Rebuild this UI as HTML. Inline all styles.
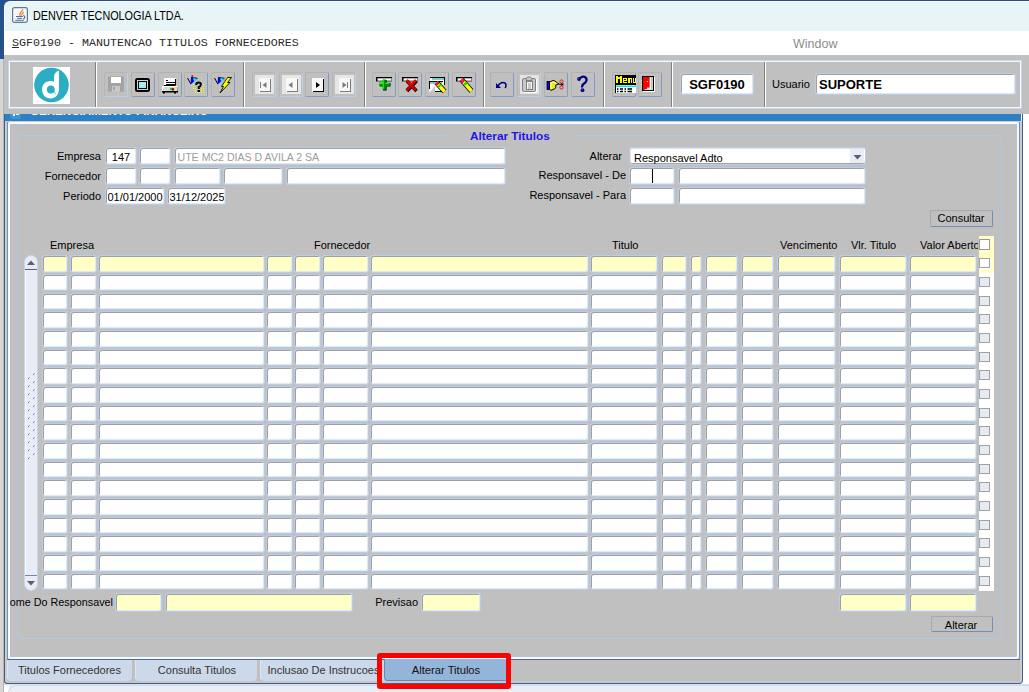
<!DOCTYPE html>
<html><head><meta charset="utf-8">
<style>
html,body{margin:0;padding:0;}
body{width:1029px;height:692px;overflow:hidden;position:relative;background:#fff;font-family:"Liberation Sans",sans-serif;}
.r,.t,.f,.b,.sv{position:absolute;}
.t{white-space:nowrap;line-height:1;}
.f{box-sizing:border-box;border:1px solid #b9cde8;border-radius:3px;box-shadow:inset 1px 1px 0 #a0a0a0, inset -1px -1px 0 #dfe8f5;}
.b{box-sizing:border-box;width:24px;height:25px;top:72px;border:1px solid;border-color:#b2b2b2 #7e9cc4 #7e9cc4 #b2b2b2;border-radius:2px;}
.b.dis{border-color:#b6b6b6 #b8cfee #b8cfee #b6b6b6;}

.sep{position:absolute;top:62px;height:45px;width:1px;background:#808080;border-right:1px solid #fff;}
</style></head><body>

<div class="r" style="left:0px;top:0px;width:1029px;height:692px;background:#fff;"></div>
<div class="r" style="left:0px;top:0px;width:3px;height:692px;background:#d6d6d6;"></div>
<div class="r" style="left:3px;top:0px;width:1px;height:692px;background:#b4b4b4;"></div>
<div class="r" style="left:0px;top:0px;width:1029px;height:1px;background:#2f4c7c;"></div>
<div class="r" style="left:0px;top:0px;width:4px;height:59px;background:#26508e;"></div>
<div class="r" style="left:0px;top:0px;width:14px;height:12px;background:#26508e;"></div>
<div class="r" style="left:4px;top:1px;width:1025px;height:30px;box-sizing:border-box;background:#e8f5f6;border-top-left-radius:6px;border-top:1px solid #f4fdfd;border-left:1px solid #f4fdfd;"></div>
<svg class="sv" style="left:12px;top:7px" width="16" height="16" viewBox="0 0 16 16">
<rect x="0.6" y="0.6" width="14.8" height="14.8" rx="1.8" fill="#f6f6f6" stroke="#5a7898" stroke-width="1.2"/>
<path d="M8.3 9 C7.2 7.5 8 6 9.5 4.5 C10.2 3.8 10.6 3.2 10.8 2.3 M9.3 8.6 C9.3 7.2 10.5 6.5 11.8 5.2" stroke="#ea7a1c" stroke-width="1.1" fill="none"/>
<path d="M4 9.5 H10.8 M5.2 11.4 H9.9 M3.3 13.3 H11.8" stroke="#4a7092" stroke-width="1" fill="none"/>
<path d="M11.3 8.3 Q14.2 10.3 11.3 12.2" stroke="#4a7092" stroke-width="1.1" fill="none"/>
</svg>
<div class="t" style="left:33px;top:10px;font-size:12px;color:#000;font-weight:normal;transform:scaleX(0.9);transform-origin:0 0;">DENVER TECNOLOGIA LTDA.</div>
<div class="r" style="left:4px;top:31px;width:1025px;height:24px;background:#fff;"></div>
<div class="t" style="left:12px;top:38px;font-size:11.67px;color:#2a2a2a;font-weight:normal;font-family:'Liberation Mono',monospace;"><u>S</u>GF0190 - MANUTENCAO TITULOS FORNECEDORES</div>
<div class="t" style="left:793px;top:38px;font-size:12.5px;color:#8c8c8c;font-weight:normal;">Window</div>
<div class="r" style="left:4px;top:55px;width:1025px;height:59px;background:#c0c0c0;"></div>
<div class="r" style="left:3px;top:55px;width:1px;height:4px;background:#284b8a;"></div>
<div class="r" style="left:8px;top:60px;width:1014px;height:49px;box-sizing:border-box;border:1px solid #c4d8f0;"></div>
<div class="r" style="left:9px;top:61px;width:1012px;height:47px;box-sizing:border-box;border:1px solid #f4f8fc;"></div>
<div class="sep" style="left:95px"></div>
<div class="sep" style="left:243px"></div>
<div class="sep" style="left:364px"></div>
<div class="sep" style="left:483px"></div>
<div class="sep" style="left:603px"></div>
<div class="sep" style="left:671px"></div>
<div class="sep" style="left:764px"></div>
<svg class="sv" style="left:33px;top:67px" width="37" height="37" viewBox="0 0 37 37">
<rect width="37" height="37" fill="#fff"/>
<circle cx="18.5" cy="18" r="17.3" fill="#2badc3"/>
<path d="M21 11 C21 6.5 23 4.5 26 3.5 L26 22 C26 27.5 22.5 31.5 17.5 31.5 C12.5 31.5 9 27.5 9 22.5 C9 17.5 12.5 14 17.5 14 C19 14 20.3 14.4 21 15 Z" fill="#fff"/>
<circle cx="17.8" cy="22.5" r="3.9" fill="#2badc3"/>
<path d="M21.2 22.5 C21.2 25 22 26.3 23.5 27.5 C22 27.3 21 26 20.8 24Z" fill="#2badc3"/>
</svg>
<div class="b dis" style="left:104px"><svg style="position:absolute;left:-1px;top:-1px" width="24" height="25" viewBox="0 0 24 25"><rect x="4" y="4" width="16" height="16" rx="1.5" fill="#a4a4a4"/>
<rect x="7" y="5" width="10" height="6" fill="#fff"/>
<rect x="8" y="14" width="8" height="6" fill="#c8c8c8"/>
<rect x="9" y="15" width="2" height="3" fill="#a4a4a4"/>
<path d="M5 4.5 H19 M5 19.5 H19" stroke="#b8b8b8" stroke-width="1" stroke-dasharray="1 1"/></svg></div>
<div class="b" style="left:131px"><svg style="position:absolute;left:-1px;top:-1px" width="24" height="25" viewBox="0 0 24 25"><rect x="5" y="7" width="13" height="12" rx="1.5" fill="#d4d4d4" stroke="#000" stroke-width="2"/>
<rect x="7.5" y="9.5" width="8" height="7" fill="#8af4f4" stroke="#000" stroke-width="1"/>
<path d="M8 11.5 H15 M8 13.5 H15" stroke="#c0e8e8" stroke-width="1"/></svg></div>
<div class="b" style="left:158px"><svg style="position:absolute;left:-1px;top:-1px" width="24" height="25" viewBox="0 0 24 25"><rect x="6" y="6" width="12" height="8" fill="#fff"/>
<path d="M17.5 7 V13.5 H6" stroke="#000" stroke-width="1" fill="none"/>
<path d="M8 8.5 H10 M8 10.5 H17 M8 12.5 H17" stroke="#000" stroke-width="1"/>
<rect x="4" y="14" width="16" height="5" fill="#d8d8d8"/>
<path d="M4 14.5 H19.5 M4.5 14 V19" stroke="#fff" stroke-width="1"/>
<path d="M19.5 15 V19" stroke="#a0a0a0" stroke-width="1"/>
<rect x="12" y="16" width="2" height="2" fill="#0c0"/><rect x="14" y="16" width="2" height="2" fill="#e00"/><rect x="16" y="16" width="2" height="1.5" fill="#ee0"/><rect x="14" y="17.5" width="2" height="1" fill="#00e"/>
<rect x="4" y="19" width="16" height="1.5" fill="#000"/><rect x="5" y="20" width="2" height="1.5" fill="#000"/><rect x="16" y="20" width="2" height="1.5" fill="#000"/></svg></div>
<div class="b" style="left:184px"><svg style="position:absolute;left:-1px;top:-1px" width="24" height="25" viewBox="0 0 24 25"><path d="M3.5 6 L6.8 12" stroke="#000" stroke-width="1"/>
<path d="M7 5.5 L13.5 6.5 L6.5 12.5 Z" fill="#0000f0"/><path d="M9 5.8 L13.5 6.5 L10 9.5 Z" fill="#00ffff"/>
<path d="M7 5.3 L13.5 6.3" stroke="#000" stroke-width="0.8"/><circle cx="8.3" cy="4" r="0.9" fill="#f00"/>
<g fill="#ffff00"><rect x="9" y="12" width="1" height="1"/><rect x="9" y="14" width="1" height="1"/><rect x="9" y="16" width="1" height="1"/><rect x="11" y="12" width="1" height="1"/><rect x="11" y="16" width="1" height="1"/><rect x="11" y="18" width="1" height="1"/><rect x="11" y="20" width="1" height="1"/><rect x="13" y="20" width="1" height="1"/><rect x="15" y="20" width="1" height="1"/><rect x="17" y="14" width="1" height="1"/><rect x="17" y="16" width="1" height="1"/><rect x="17" y="18" width="1" height="1"/><rect x="17" y="20" width="1" height="1"/><rect x="19" y="12" width="1" height="1"/><rect x="19" y="14" width="1" height="1"/><rect x="19" y="16" width="1" height="1"/><rect x="19" y="18" width="1" height="1"/><rect x="19" y="20" width="1" height="1"/></g>
<path d="M12 13 Q12.5 10.5 14.5 10.5 Q17 10.5 16.8 12.8 Q16.5 14.5 14.8 15 L14.8 17" stroke="#000" stroke-width="2" fill="none"/><rect x="13.5" y="18" width="2.5" height="2" fill="#000"/></svg></div>
<div class="b" style="left:211px"><svg style="position:absolute;left:-1px;top:-1px" width="24" height="25" viewBox="0 0 24 25"><path d="M3.5 6 L6.8 12" stroke="#000" stroke-width="1"/>
<path d="M7 5.5 L13.5 6.5 L6.5 12.5 Z" fill="#0000f0"/><path d="M9 5.8 L13.5 6.5 L10 9.5 Z" fill="#00ffff"/>
<path d="M7 5.3 L13.5 6.3" stroke="#000" stroke-width="0.8"/><path d="M16.5 5.5 L20.5 5.5 L16.5 10.5 L19 10.5 L9 21 L12.5 14.5 L10.5 14.5 Z" fill="#ffff00" stroke="#000" stroke-width="0.9" stroke-linejoin="bevel"/>
<path d="M15.5 6 L9.8 14.2" stroke="#909090" stroke-width="0.8"/></svg></div>
<div class="b dis" style="left:252px"><svg style="position:absolute;left:-1px;top:-1px" width="24" height="25" viewBox="0 0 24 25"><rect x="3" y="3" width="19" height="19" fill="#e6e6e6"/><rect x="7" y="6" width="12" height="14" fill="#f8f8f8"/><path d="M8 19.5 H19 M18.5 7 V19.5" stroke="#7c7c7c" stroke-width="1" fill="none"/><rect x="8" y="10" width="1" height="6" fill="#7c7c7c"/><path d="M14.5 10 L10.5 13 L14.5 16Z" fill="#7c7c7c"/></svg></div>
<div class="b dis" style="left:279px"><svg style="position:absolute;left:-1px;top:-1px" width="24" height="25" viewBox="0 0 24 25"><rect x="3" y="3" width="19" height="19" fill="#e6e6e6"/><rect x="7" y="6" width="12" height="14" fill="#f8f8f8"/><path d="M8 19.5 H19 M18.5 7 V19.5" stroke="#7c7c7c" stroke-width="1" fill="none"/><path d="M13.5 10 L9.5 13 L13.5 16Z" fill="#7c7c7c"/></svg></div>
<div class="b" style="left:305px"><svg style="position:absolute;left:-1px;top:-1px" width="24" height="25" viewBox="0 0 24 25"><rect x="7" y="6" width="12" height="14" fill="#f8f8f8"/><path d="M8 19.5 H19 M18.5 7 V19.5" stroke="#000" stroke-width="1" fill="none"/><path d="M11 10 L15 13 L11 16Z" fill="#000"/></svg></div>
<div class="b dis" style="left:332px"><svg style="position:absolute;left:-1px;top:-1px" width="24" height="25" viewBox="0 0 24 25"><rect x="3" y="3" width="19" height="19" fill="#e6e6e6"/><rect x="7" y="6" width="12" height="14" fill="#f8f8f8"/><path d="M8 19.5 H19 M18.5 7 V19.5" stroke="#7c7c7c" stroke-width="1" fill="none"/><path d="M10.5 10 L14.5 13 L10.5 16Z" fill="#7c7c7c"/><rect x="15" y="10" width="1" height="6" fill="#7c7c7c"/></svg></div>
<div class="b" style="left:372px"><svg style="position:absolute;left:-1px;top:-1px" width="24" height="25" viewBox="0 0 24 25"><rect x="4" y="5" width="16" height="4.5" fill="#000"/><rect x="5.5" y="6.3" width="13.8" height="2.4" fill="#fff"/><path d="M19.5 6 V9.5 H5" stroke="#808080" stroke-width="1" fill="none"/><path d="M12.8 8 V18.5 M8 12.8 H18.5" stroke="#000" stroke-width="3.6"/>
<path d="M12.3 7.5 V17.8 M7.2 12.3 H17.8" stroke="#009000" stroke-width="3.2"/>
<path d="M11.3 7.5 V17 M7 11.3 H11.3 M13.3 11.3 H17" stroke="#00ff00" stroke-width="1.2"/></svg></div>
<div class="b" style="left:398px"><svg style="position:absolute;left:-1px;top:-1px" width="24" height="25" viewBox="0 0 24 25"><rect x="4" y="5" width="16" height="4.5" fill="#000"/><rect x="5.5" y="6.3" width="13.8" height="2.4" fill="#fff"/><path d="M19.5 6 V9.5 H5" stroke="#808080" stroke-width="1" fill="none"/><path d="M9 9 L18.5 19 M18.5 9 L9 19" stroke="#000" stroke-width="3.4"/>
<path d="M8.5 8.3 L18 18.3 M18 8.3 L8.5 18.3" stroke="#c00000" stroke-width="3"/>
<path d="M8.5 8 L13 12.5 M17.5 8 L13 12.5" stroke="#ff0000" stroke-width="1.2"/></svg></div>
<div class="b" style="left:425px"><svg style="position:absolute;left:-1px;top:-1px" width="24" height="25" viewBox="0 0 24 25"><rect x="5" y="5" width="15" height="8" fill="#fff"/><path d="M5 5.5 H20 M19.5 5 V13" stroke="#000" stroke-width="1"/><rect x="7" y="6.5" width="12" height="1" fill="#00a0a0"/>
<rect x="4" y="9" width="14" height="11" fill="#fff"/><path d="M4 9.5 H18 M4.5 9 V17 M10 19.5 H18" stroke="#000" stroke-width="1"/><rect x="5" y="10.5" width="12" height="1" fill="#00a0a0"/>
<path d="M5 20 L10 14 L10 20Z" fill="#c8c8c8"/><path d="M11.5 10.5 L19.5 19.5" stroke="#000" stroke-width="5.2"/>
<path d="M11.5 10.5 L19.5 19.5" stroke="#ffff00" stroke-width="3.6"/>
<path d="M11.5 10.5 L13.26 12.48" stroke="#ff0000" stroke-width="3.6"/>
<path d="M11.9 10.95 L12.7 11.85" stroke="#ff00ff" stroke-width="2.4"/>
<path d="M13.9 13.2 L15.1 14.55" stroke="#00e000" stroke-width="3.6"/></svg></div>
<div class="b" style="left:452px"><svg style="position:absolute;left:-1px;top:-1px" width="24" height="25" viewBox="0 0 24 25"><rect x="4" y="5" width="16" height="4.5" fill="#000"/><rect x="5.5" y="6.3" width="13.8" height="2.4" fill="#fff"/><path d="M19.5 6 V9.5 H5" stroke="#808080" stroke-width="1" fill="none"/><path d="M9.5 7.5 L19.5 19" stroke="#000" stroke-width="5.2"/>
<path d="M9.5 7.5 L19.5 19" stroke="#ffff00" stroke-width="3.6"/>
<path d="M9.5 7.5 L11.7 10.03" stroke="#ff0000" stroke-width="3.6"/>
<path d="M10.0 8.075 L11.0 9.225" stroke="#ff00ff" stroke-width="2.4"/>
<path d="M12.5 10.95 L14.0 12.675" stroke="#00e000" stroke-width="3.6"/></svg></div>
<div class="b" style="left:490px"><svg style="position:absolute;left:-1px;top:-1px" width="24" height="25" viewBox="0 0 24 25"><path d="M8 14 Q10 10.5 13 10.5 Q16 10.5 16 13.5 Q16 15 15 16" stroke="#000080" stroke-width="1.5" fill="none"/>
<path d="M6 11 L6 16 L11 16 Z" fill="#000080"/></svg></div>
<div class="b dis" style="left:517px"><svg style="position:absolute;left:-1px;top:-1px" width="24" height="25" viewBox="0 0 24 25"><rect x="3" y="3" width="19" height="19" fill="#e4e4e4"/>
<rect x="5.5" y="6.5" width="13" height="13" rx="1.5" fill="#c8c8c8" stroke="#808080" stroke-width="1"/>
<path d="M6 20.5 H19 M19.5 7 V20" stroke="#fff" stroke-width="1"/>
<rect x="9.5" y="9.5" width="6" height="8" fill="#fafafa" stroke="#808080" stroke-width="1"/>
<path d="M9.5 6.5 L10.5 5 H13.5 L14.5 6.5 L15 8.5 H9 Z" fill="#c8c8c8" stroke="#808080" stroke-width="1"/>
<path d="M11 12 H14 M11 14 H14 M11 16 H14" stroke="#909090" stroke-width="0.9"/></svg></div>
<div class="b" style="left:544px"><svg style="position:absolute;left:-1px;top:-1px" width="24" height="25" viewBox="0 0 24 25"><rect x="3" y="9.5" width="2.5" height="8" fill="#0000ff" stroke="#000" stroke-width="0.8"/>
<path d="M5.5 10 L9 8.5 L11 9 L13.5 11 L15 11.8 L11.5 13 L12 15 L10.5 17 L7 18.3 L5.5 17.5 Z" fill="#ffff40" stroke="#000" stroke-width="1"/>
<path d="M8 12 H11 M8 14 H11 M8 16 H10" stroke="#b0a000" stroke-width="0.6"/>
<path d="M15 12.3 L19.5 12.3" stroke="#000" stroke-width="1"/>
<circle cx="17.5" cy="9.5" r="1.6" fill="none" stroke="#ff0000" stroke-width="0.9"/><circle cx="17.5" cy="15.5" r="1.6" fill="none" stroke="#ff0000" stroke-width="0.9"/>
<path d="M17.5 11 L19 13.5 M17.5 14 L19 11.5" stroke="#000" stroke-width="0.8"/></svg></div>
<div class="b" style="left:571px"><svg style="position:absolute;left:-1px;top:-1px" width="24" height="25" viewBox="0 0 24 25"><path d="M9 6.3 Q11 4.2 13.5 4.8 Q15.8 5.5 15.5 8.3 Q15.2 10.3 12.5 12 Q11 13 11 15.5" stroke="#000080" stroke-width="2.3" fill="none"/>
<circle cx="8" cy="7" r="1.9" fill="#000080"/><circle cx="11.5" cy="18.2" r="1.9" fill="#000080"/>
<circle cx="7.6" cy="6.5" r="0.5" fill="#8080ff"/><circle cx="11.1" cy="17.7" r="0.5" fill="#8080ff"/></svg></div>
<div class="b" style="left:612px"><svg style="position:absolute;left:-1px;top:-1px" width="24" height="25" viewBox="0 0 24 25"><rect x="3" y="3" width="21" height="9" fill="#000"/>
<g fill="#ffff00" shape-rendering="crispEdges"><rect x="4" y="4" width="2" height="7"/><rect x="8" y="4" width="2" height="7"/><rect x="6" y="5" width="1" height="2"/><rect x="7" y="5" width="1" height="2"/><rect x="6" y="6" width="2" height="1"/><rect x="11" y="6" width="4" height="1"/><rect x="11" y="6" width="1" height="5"/><rect x="14" y="6" width="1" height="3"/><rect x="11" y="8" width="4" height="1"/><rect x="11" y="10" width="4" height="1"/><rect x="16" y="6" width="2" height="5"/><rect x="16" y="6" width="4" height="1"/><rect x="19" y="6" width="1" height="5"/><rect x="21" y="6" width="1" height="5"/><rect x="21" y="10" width="3" height="1"/><rect x="23" y="6" width="1" height="5"/></g>
<rect x="3" y="12" width="21" height="9" fill="#fff"/>
<path d="M3 12.5 H24 M3.5 12 V21" stroke="#000" stroke-width="1"/><rect x="4" y="13.5" width="20" height="1.5" fill="#00e8e8"/>
<path d="M5 17 H6.5 M8 17 H11 M12.5 17 H14 M15.5 17 H20 M5 19.5 H6.5 M8 19.5 H11 M12.5 19.5 H14 M15.5 19.5 H20" stroke="#000" stroke-width="1.5"/></svg></div>
<div class="b" style="left:638px"><svg style="position:absolute;left:-1px;top:-1px" width="24" height="25" viewBox="0 0 24 25"><rect x="5" y="5" width="12" height="15" fill="#fff"/>
<rect x="4.5" y="4.5" width="11" height="14" fill="#c8c8c8" stroke="#000" stroke-width="1"/>
<path d="M12.5 6 V17 H8" stroke="#fff" stroke-width="1" fill="none"/>
<path d="M5 5 L11.5 5 L11.5 15.5 L9 15.5 L9 17 L6.5 17 L6.5 18 L5 18 Z" fill="#ff0000"/>
<rect x="9" y="9" width="1" height="1" fill="#ffff00"/><rect x="3" y="8" width="1" height="1" fill="#ffff00"/><rect x="3" y="12" width="1" height="1" fill="#ffff00"/></svg></div>
<div class="f" style="left:680px;top:73px;width:74px;height:22px;background:#fff;border-radius:3px;"><span style="position:absolute;left:3px;right:3px;top:0px;bottom:0px;line-height:21px;text-align:center;color:#000;font-size:13px;font-weight:bold;white-space:nowrap;overflow:hidden">SGF0190</span></div>
<div class="t" style="left:772px;top:79px;font-size:11px;color:#000;font-weight:normal;">Usuario</div>
<div class="f" style="left:815px;top:73px;width:201px;height:22px;background:#fff;border-radius:3px;"><span style="position:absolute;left:3px;right:3px;top:0px;bottom:0px;line-height:21px;text-align:left;color:#000;font-size:13px;font-weight:bold;white-space:nowrap;overflow:hidden">SUPORTE</span></div>
<div class="r" style="left:4px;top:114px;width:1017px;height:7px;background:#2c80c3;"></div>
<div class="r" style="left:4px;top:114px;width:1017px;height:7px;overflow:hidden"><div class="t" style="left:26px;top:-9px;font-size:11.6px;color:#fff;font-weight:bold">GERENCIAMENTO FINANCEIRO</div></div>
<div class="r" style="left:10px;top:114px;width:11px;height:5px;background:#3f94d8;border-radius:0 0 2px 2px;"></div>
<div class="r" style="left:13px;top:114px;width:2px;height:2px;background:#fff;"></div>
<div class="r" style="left:16px;top:114px;width:3px;height:1px;background:#fff;"></div>
<div class="r" style="left:4px;top:121px;width:1018px;height:562px;background:#c0c0c0;"></div>
<div class="r" style="left:5px;top:121px;width:2px;height:562px;background:#cfccc8;"></div>
<div class="r" style="left:5px;top:121px;width:1016px;height:1px;background:#cfccc8;"></div>
<div class="r" style="left:1020px;top:121px;width:2px;height:562px;background:#cfccc8;"></div>
<div class="r" style="left:5px;top:681px;width:1016px;height:2px;background:#cfccc8;"></div>
<div class="r" style="left:7px;top:122px;width:1013px;height:538px;box-sizing:border-box;border:1px solid #6e8fbe;border-top:none;border-radius:0 0 2px 2px;"></div>
<div class="r" style="left:8px;top:122px;width:1011px;height:537px;box-sizing:border-box;border:2px solid #f6f9fd;border-right-width:2px;border-bottom-width:2px;border-radius:2px 2px 3px 2px;"></div>
<div class="r" style="left:17px;top:135px;width:985px;height:504px;box-sizing:border-box;border:1px solid #b4c8e2;border-radius:4px;"></div>
<div class="r" style="left:446px;top:130px;width:128px;height:12px;background:#c0c0c0;"></div>
<div class="t" style="left:470px;top:131px;font-size:11.8px;color:#1e14e8;font-weight:bold;">Alterar Titulos</div>
<div class="t" style="right:928px;top:151px;font-size:11px;color:#000;font-weight:normal;">Empresa</div>
<div class="t" style="right:928px;top:171px;font-size:11px;color:#000;font-weight:normal;">Fornecedor</div>
<div class="t" style="right:928px;top:191px;font-size:11px;color:#000;font-weight:normal;">Periodo</div>
<div class="f" style="left:105px;top:147px;width:32px;height:18px;background:#fff;"><span style="position:absolute;left:0px;right:0px;top:1px;bottom:-1px;line-height:17px;text-align:center;color:#000;font-size:11px;font-weight:normal;white-space:nowrap;overflow:hidden">147</span></div>
<div class="f" style="left:139px;top:147px;width:32px;height:18px;background:#fff;"></div>
<div class="f" style="left:174px;top:147px;width:332px;height:18px;background:#fff;"><span style="position:absolute;left:2.5px;right:2.5px;top:1px;bottom:-1px;line-height:17px;text-align:left;color:#9c9c9c;font-size:10.6px;font-weight:normal;white-space:nowrap;overflow:hidden">UTE MC2 DIAS D AVILA 2 SA</span></div>
<div class="f" style="left:105px;top:167px;width:32px;height:18px;background:#fff;"></div>
<div class="f" style="left:139px;top:167px;width:32px;height:18px;background:#fff;"></div>
<div class="f" style="left:174px;top:167px;width:47px;height:18px;background:#fff;"></div>
<div class="f" style="left:223px;top:167px;width:60px;height:18px;background:#fff;"></div>
<div class="f" style="left:286px;top:167px;width:220px;height:18px;background:#fff;"></div>
<div class="f" style="left:105px;top:187px;width:60px;height:18px;background:#fff;"><span style="position:absolute;left:1.5px;right:1.5px;top:0.5px;bottom:-0.5px;line-height:17px;text-align:left;color:#000;font-size:11px;font-weight:normal;white-space:nowrap;overflow:hidden">01/01/2000</span></div>
<div class="f" style="left:167px;top:187px;width:59px;height:18px;background:#fff;overflow:visible"><span style="position:absolute;left:1.5px;right:1.5px;top:0.5px;bottom:-0.5px;line-height:17px;text-align:left;color:#000;font-size:11px;font-weight:normal;white-space:nowrap;overflow:hidden">31/12/2025</span></div>
<div class="t" style="right:407px;top:151px;font-size:11px;color:#000;font-weight:normal;">Alterar</div>
<div class="t" style="right:403px;top:170px;font-size:11px;color:#000;font-weight:normal;">Responsavel - De</div>
<div class="t" style="right:403px;top:190px;font-size:11px;color:#000;font-weight:normal;">Responsavel - Para</div>
<div class="f" style="left:629px;top:147px;width:237px;height:18px;background:#fff;box-shadow:inset 0 -1px 0 #a4a4a4, inset 1px 1px 0 #e0e0e0;"><span style="position:absolute;left:4px;right:4px;top:1.5px;bottom:-1.5px;line-height:17px;text-align:left;color:#000;font-size:11px;font-weight:normal;white-space:nowrap;overflow:hidden">Responsavel Adto</span></div>
<div class="r" style="left:850px;top:149px;width:14px;height:14px;background:#e8ecf4;"></div>
<svg class="sv" style="left:853px;top:155px" width="9" height="5" viewBox="0 0 9 5"><path d="M0.5 0 H8.5 L4.5 4.5Z" fill="#5c5c78"/></svg>
<div class="f" style="left:629px;top:167px;width:46px;height:18px;background:#fff;"></div>
<div class="r" style="left:652px;top:169px;width:1px;height:14px;background:#000;"></div>
<div class="f" style="left:678px;top:167px;width:188px;height:18px;background:#fff;"></div>
<div class="f" style="left:629px;top:187px;width:46px;height:18px;background:#fff;"></div>
<div class="f" style="left:678px;top:187px;width:188px;height:18px;background:#fff;"></div>
<div class="r" style="left:930px;top:210px;width:63px;height:17px;box-sizing:border-box;border:1px solid;border-color:#a8a8a8 #6f8fbb #6f8fbb #a8a8a8;border-radius:2px;"></div>
<div class="t" style="left:761px;width:400px;text-align:center;top:213px;font-size:11px;color:#000;font-weight:normal;">Consultar</div>
<div class="t" style="left:50px;top:240px;font-size:11px;color:#000;font-weight:normal;">Empresa</div>
<div class="t" style="left:314px;top:240px;font-size:11px;color:#000;font-weight:normal;">Fornecedor</div>
<div class="t" style="left:612px;top:240px;font-size:11px;color:#000;font-weight:normal;">Titulo</div>
<div class="t" style="left:780px;top:240px;font-size:11px;color:#000;font-weight:normal;">Vencimento</div>
<div class="t" style="left:851px;top:240px;font-size:11px;color:#000;font-weight:normal;">Vlr. Titulo</div>
<div class="r" style="left:900px;top:236px;width:78px;height:16px;overflow:hidden"><div class="t" style="left:20px;top:4px;font-size:11px">Valor Aberto</div></div>
<div class="f" style="left:42px;top:255px;width:26px;height:18px;background:#ffffc6;"></div>
<div class="f" style="left:70px;top:255px;width:27px;height:18px;background:#ffffc6;"></div>
<div class="f" style="left:98px;top:255px;width:167px;height:18px;background:#ffffc6;"></div>
<div class="f" style="left:266px;top:255px;width:27px;height:18px;background:#ffffc6;"></div>
<div class="f" style="left:294px;top:255px;width:27px;height:18px;background:#ffffc6;"></div>
<div class="f" style="left:322px;top:255px;width:47px;height:18px;background:#ffffc6;"></div>
<div class="f" style="left:370px;top:255px;width:219px;height:18px;background:#ffffc6;"></div>
<div class="f" style="left:590px;top:255px;width:68px;height:18px;background:#ffffc6;"></div>
<div class="f" style="left:661px;top:255px;width:26px;height:18px;background:#ffffc6;"></div>
<div class="f" style="left:690px;top:255px;width:12px;height:18px;background:#ffffc6;"></div>
<div class="f" style="left:705px;top:255px;width:33px;height:18px;background:#ffffc6;"></div>
<div class="f" style="left:741px;top:255px;width:33px;height:18px;background:#ffffc6;"></div>
<div class="f" style="left:777px;top:255px;width:59px;height:18px;background:#ffffc6;"></div>
<div class="f" style="left:839px;top:255px;width:68px;height:18px;background:#ffffc6;"></div>
<div class="f" style="left:909px;top:255px;width:68px;height:18px;background:#ffffc6;"></div>
<div class="f" style="left:42px;top:274px;width:26px;height:17px;background:#fff;"></div>
<div class="f" style="left:70px;top:274px;width:27px;height:17px;background:#fff;"></div>
<div class="f" style="left:98px;top:274px;width:167px;height:17px;background:#fff;"></div>
<div class="f" style="left:266px;top:274px;width:27px;height:17px;background:#fff;"></div>
<div class="f" style="left:294px;top:274px;width:27px;height:17px;background:#fff;"></div>
<div class="f" style="left:322px;top:274px;width:47px;height:17px;background:#fff;"></div>
<div class="f" style="left:370px;top:274px;width:219px;height:17px;background:#fff;"></div>
<div class="f" style="left:590px;top:274px;width:68px;height:17px;background:#fff;"></div>
<div class="f" style="left:661px;top:274px;width:26px;height:17px;background:#fff;"></div>
<div class="f" style="left:690px;top:274px;width:12px;height:17px;background:#fff;"></div>
<div class="f" style="left:705px;top:274px;width:33px;height:17px;background:#fff;"></div>
<div class="f" style="left:741px;top:274px;width:33px;height:17px;background:#fff;"></div>
<div class="f" style="left:777px;top:274px;width:59px;height:17px;background:#fff;"></div>
<div class="f" style="left:839px;top:274px;width:68px;height:17px;background:#fff;"></div>
<div class="f" style="left:909px;top:274px;width:68px;height:17px;background:#fff;"></div>
<div class="f" style="left:42px;top:293px;width:26px;height:17px;background:#fff;"></div>
<div class="f" style="left:70px;top:293px;width:27px;height:17px;background:#fff;"></div>
<div class="f" style="left:98px;top:293px;width:167px;height:17px;background:#fff;"></div>
<div class="f" style="left:266px;top:293px;width:27px;height:17px;background:#fff;"></div>
<div class="f" style="left:294px;top:293px;width:27px;height:17px;background:#fff;"></div>
<div class="f" style="left:322px;top:293px;width:47px;height:17px;background:#fff;"></div>
<div class="f" style="left:370px;top:293px;width:219px;height:17px;background:#fff;"></div>
<div class="f" style="left:590px;top:293px;width:68px;height:17px;background:#fff;"></div>
<div class="f" style="left:661px;top:293px;width:26px;height:17px;background:#fff;"></div>
<div class="f" style="left:690px;top:293px;width:12px;height:17px;background:#fff;"></div>
<div class="f" style="left:705px;top:293px;width:33px;height:17px;background:#fff;"></div>
<div class="f" style="left:741px;top:293px;width:33px;height:17px;background:#fff;"></div>
<div class="f" style="left:777px;top:293px;width:59px;height:17px;background:#fff;"></div>
<div class="f" style="left:839px;top:293px;width:68px;height:17px;background:#fff;"></div>
<div class="f" style="left:909px;top:293px;width:68px;height:17px;background:#fff;"></div>
<div class="f" style="left:42px;top:311px;width:26px;height:18px;background:#fff;"></div>
<div class="f" style="left:70px;top:311px;width:27px;height:18px;background:#fff;"></div>
<div class="f" style="left:98px;top:311px;width:167px;height:18px;background:#fff;"></div>
<div class="f" style="left:266px;top:311px;width:27px;height:18px;background:#fff;"></div>
<div class="f" style="left:294px;top:311px;width:27px;height:18px;background:#fff;"></div>
<div class="f" style="left:322px;top:311px;width:47px;height:18px;background:#fff;"></div>
<div class="f" style="left:370px;top:311px;width:219px;height:18px;background:#fff;"></div>
<div class="f" style="left:590px;top:311px;width:68px;height:18px;background:#fff;"></div>
<div class="f" style="left:661px;top:311px;width:26px;height:18px;background:#fff;"></div>
<div class="f" style="left:690px;top:311px;width:12px;height:18px;background:#fff;"></div>
<div class="f" style="left:705px;top:311px;width:33px;height:18px;background:#fff;"></div>
<div class="f" style="left:741px;top:311px;width:33px;height:18px;background:#fff;"></div>
<div class="f" style="left:777px;top:311px;width:59px;height:18px;background:#fff;"></div>
<div class="f" style="left:839px;top:311px;width:68px;height:18px;background:#fff;"></div>
<div class="f" style="left:909px;top:311px;width:68px;height:18px;background:#fff;"></div>
<div class="f" style="left:42px;top:330px;width:26px;height:18px;background:#fff;"></div>
<div class="f" style="left:70px;top:330px;width:27px;height:18px;background:#fff;"></div>
<div class="f" style="left:98px;top:330px;width:167px;height:18px;background:#fff;"></div>
<div class="f" style="left:266px;top:330px;width:27px;height:18px;background:#fff;"></div>
<div class="f" style="left:294px;top:330px;width:27px;height:18px;background:#fff;"></div>
<div class="f" style="left:322px;top:330px;width:47px;height:18px;background:#fff;"></div>
<div class="f" style="left:370px;top:330px;width:219px;height:18px;background:#fff;"></div>
<div class="f" style="left:590px;top:330px;width:68px;height:18px;background:#fff;"></div>
<div class="f" style="left:661px;top:330px;width:26px;height:18px;background:#fff;"></div>
<div class="f" style="left:690px;top:330px;width:12px;height:18px;background:#fff;"></div>
<div class="f" style="left:705px;top:330px;width:33px;height:18px;background:#fff;"></div>
<div class="f" style="left:741px;top:330px;width:33px;height:18px;background:#fff;"></div>
<div class="f" style="left:777px;top:330px;width:59px;height:18px;background:#fff;"></div>
<div class="f" style="left:839px;top:330px;width:68px;height:18px;background:#fff;"></div>
<div class="f" style="left:909px;top:330px;width:68px;height:18px;background:#fff;"></div>
<div class="f" style="left:42px;top:349px;width:26px;height:17px;background:#fff;"></div>
<div class="f" style="left:70px;top:349px;width:27px;height:17px;background:#fff;"></div>
<div class="f" style="left:98px;top:349px;width:167px;height:17px;background:#fff;"></div>
<div class="f" style="left:266px;top:349px;width:27px;height:17px;background:#fff;"></div>
<div class="f" style="left:294px;top:349px;width:27px;height:17px;background:#fff;"></div>
<div class="f" style="left:322px;top:349px;width:47px;height:17px;background:#fff;"></div>
<div class="f" style="left:370px;top:349px;width:219px;height:17px;background:#fff;"></div>
<div class="f" style="left:590px;top:349px;width:68px;height:17px;background:#fff;"></div>
<div class="f" style="left:661px;top:349px;width:26px;height:17px;background:#fff;"></div>
<div class="f" style="left:690px;top:349px;width:12px;height:17px;background:#fff;"></div>
<div class="f" style="left:705px;top:349px;width:33px;height:17px;background:#fff;"></div>
<div class="f" style="left:741px;top:349px;width:33px;height:17px;background:#fff;"></div>
<div class="f" style="left:777px;top:349px;width:59px;height:17px;background:#fff;"></div>
<div class="f" style="left:839px;top:349px;width:68px;height:17px;background:#fff;"></div>
<div class="f" style="left:909px;top:349px;width:68px;height:17px;background:#fff;"></div>
<div class="f" style="left:42px;top:367px;width:26px;height:18px;background:#fff;"></div>
<div class="f" style="left:70px;top:367px;width:27px;height:18px;background:#fff;"></div>
<div class="f" style="left:98px;top:367px;width:167px;height:18px;background:#fff;"></div>
<div class="f" style="left:266px;top:367px;width:27px;height:18px;background:#fff;"></div>
<div class="f" style="left:294px;top:367px;width:27px;height:18px;background:#fff;"></div>
<div class="f" style="left:322px;top:367px;width:47px;height:18px;background:#fff;"></div>
<div class="f" style="left:370px;top:367px;width:219px;height:18px;background:#fff;"></div>
<div class="f" style="left:590px;top:367px;width:68px;height:18px;background:#fff;"></div>
<div class="f" style="left:661px;top:367px;width:26px;height:18px;background:#fff;"></div>
<div class="f" style="left:690px;top:367px;width:12px;height:18px;background:#fff;"></div>
<div class="f" style="left:705px;top:367px;width:33px;height:18px;background:#fff;"></div>
<div class="f" style="left:741px;top:367px;width:33px;height:18px;background:#fff;"></div>
<div class="f" style="left:777px;top:367px;width:59px;height:18px;background:#fff;"></div>
<div class="f" style="left:839px;top:367px;width:68px;height:18px;background:#fff;"></div>
<div class="f" style="left:909px;top:367px;width:68px;height:18px;background:#fff;"></div>
<div class="f" style="left:42px;top:386px;width:26px;height:18px;background:#fff;"></div>
<div class="f" style="left:70px;top:386px;width:27px;height:18px;background:#fff;"></div>
<div class="f" style="left:98px;top:386px;width:167px;height:18px;background:#fff;"></div>
<div class="f" style="left:266px;top:386px;width:27px;height:18px;background:#fff;"></div>
<div class="f" style="left:294px;top:386px;width:27px;height:18px;background:#fff;"></div>
<div class="f" style="left:322px;top:386px;width:47px;height:18px;background:#fff;"></div>
<div class="f" style="left:370px;top:386px;width:219px;height:18px;background:#fff;"></div>
<div class="f" style="left:590px;top:386px;width:68px;height:18px;background:#fff;"></div>
<div class="f" style="left:661px;top:386px;width:26px;height:18px;background:#fff;"></div>
<div class="f" style="left:690px;top:386px;width:12px;height:18px;background:#fff;"></div>
<div class="f" style="left:705px;top:386px;width:33px;height:18px;background:#fff;"></div>
<div class="f" style="left:741px;top:386px;width:33px;height:18px;background:#fff;"></div>
<div class="f" style="left:777px;top:386px;width:59px;height:18px;background:#fff;"></div>
<div class="f" style="left:839px;top:386px;width:68px;height:18px;background:#fff;"></div>
<div class="f" style="left:909px;top:386px;width:68px;height:18px;background:#fff;"></div>
<div class="f" style="left:42px;top:405px;width:26px;height:17px;background:#fff;"></div>
<div class="f" style="left:70px;top:405px;width:27px;height:17px;background:#fff;"></div>
<div class="f" style="left:98px;top:405px;width:167px;height:17px;background:#fff;"></div>
<div class="f" style="left:266px;top:405px;width:27px;height:17px;background:#fff;"></div>
<div class="f" style="left:294px;top:405px;width:27px;height:17px;background:#fff;"></div>
<div class="f" style="left:322px;top:405px;width:47px;height:17px;background:#fff;"></div>
<div class="f" style="left:370px;top:405px;width:219px;height:17px;background:#fff;"></div>
<div class="f" style="left:590px;top:405px;width:68px;height:17px;background:#fff;"></div>
<div class="f" style="left:661px;top:405px;width:26px;height:17px;background:#fff;"></div>
<div class="f" style="left:690px;top:405px;width:12px;height:17px;background:#fff;"></div>
<div class="f" style="left:705px;top:405px;width:33px;height:17px;background:#fff;"></div>
<div class="f" style="left:741px;top:405px;width:33px;height:17px;background:#fff;"></div>
<div class="f" style="left:777px;top:405px;width:59px;height:17px;background:#fff;"></div>
<div class="f" style="left:839px;top:405px;width:68px;height:17px;background:#fff;"></div>
<div class="f" style="left:909px;top:405px;width:68px;height:17px;background:#fff;"></div>
<div class="f" style="left:42px;top:423px;width:26px;height:18px;background:#fff;"></div>
<div class="f" style="left:70px;top:423px;width:27px;height:18px;background:#fff;"></div>
<div class="f" style="left:98px;top:423px;width:167px;height:18px;background:#fff;"></div>
<div class="f" style="left:266px;top:423px;width:27px;height:18px;background:#fff;"></div>
<div class="f" style="left:294px;top:423px;width:27px;height:18px;background:#fff;"></div>
<div class="f" style="left:322px;top:423px;width:47px;height:18px;background:#fff;"></div>
<div class="f" style="left:370px;top:423px;width:219px;height:18px;background:#fff;"></div>
<div class="f" style="left:590px;top:423px;width:68px;height:18px;background:#fff;"></div>
<div class="f" style="left:661px;top:423px;width:26px;height:18px;background:#fff;"></div>
<div class="f" style="left:690px;top:423px;width:12px;height:18px;background:#fff;"></div>
<div class="f" style="left:705px;top:423px;width:33px;height:18px;background:#fff;"></div>
<div class="f" style="left:741px;top:423px;width:33px;height:18px;background:#fff;"></div>
<div class="f" style="left:777px;top:423px;width:59px;height:18px;background:#fff;"></div>
<div class="f" style="left:839px;top:423px;width:68px;height:18px;background:#fff;"></div>
<div class="f" style="left:909px;top:423px;width:68px;height:18px;background:#fff;"></div>
<div class="f" style="left:42px;top:442px;width:26px;height:18px;background:#fff;"></div>
<div class="f" style="left:70px;top:442px;width:27px;height:18px;background:#fff;"></div>
<div class="f" style="left:98px;top:442px;width:167px;height:18px;background:#fff;"></div>
<div class="f" style="left:266px;top:442px;width:27px;height:18px;background:#fff;"></div>
<div class="f" style="left:294px;top:442px;width:27px;height:18px;background:#fff;"></div>
<div class="f" style="left:322px;top:442px;width:47px;height:18px;background:#fff;"></div>
<div class="f" style="left:370px;top:442px;width:219px;height:18px;background:#fff;"></div>
<div class="f" style="left:590px;top:442px;width:68px;height:18px;background:#fff;"></div>
<div class="f" style="left:661px;top:442px;width:26px;height:18px;background:#fff;"></div>
<div class="f" style="left:690px;top:442px;width:12px;height:18px;background:#fff;"></div>
<div class="f" style="left:705px;top:442px;width:33px;height:18px;background:#fff;"></div>
<div class="f" style="left:741px;top:442px;width:33px;height:18px;background:#fff;"></div>
<div class="f" style="left:777px;top:442px;width:59px;height:18px;background:#fff;"></div>
<div class="f" style="left:839px;top:442px;width:68px;height:18px;background:#fff;"></div>
<div class="f" style="left:909px;top:442px;width:68px;height:18px;background:#fff;"></div>
<div class="f" style="left:42px;top:461px;width:26px;height:17px;background:#fff;"></div>
<div class="f" style="left:70px;top:461px;width:27px;height:17px;background:#fff;"></div>
<div class="f" style="left:98px;top:461px;width:167px;height:17px;background:#fff;"></div>
<div class="f" style="left:266px;top:461px;width:27px;height:17px;background:#fff;"></div>
<div class="f" style="left:294px;top:461px;width:27px;height:17px;background:#fff;"></div>
<div class="f" style="left:322px;top:461px;width:47px;height:17px;background:#fff;"></div>
<div class="f" style="left:370px;top:461px;width:219px;height:17px;background:#fff;"></div>
<div class="f" style="left:590px;top:461px;width:68px;height:17px;background:#fff;"></div>
<div class="f" style="left:661px;top:461px;width:26px;height:17px;background:#fff;"></div>
<div class="f" style="left:690px;top:461px;width:12px;height:17px;background:#fff;"></div>
<div class="f" style="left:705px;top:461px;width:33px;height:17px;background:#fff;"></div>
<div class="f" style="left:741px;top:461px;width:33px;height:17px;background:#fff;"></div>
<div class="f" style="left:777px;top:461px;width:59px;height:17px;background:#fff;"></div>
<div class="f" style="left:839px;top:461px;width:68px;height:17px;background:#fff;"></div>
<div class="f" style="left:909px;top:461px;width:68px;height:17px;background:#fff;"></div>
<div class="f" style="left:42px;top:479px;width:26px;height:18px;background:#fff;"></div>
<div class="f" style="left:70px;top:479px;width:27px;height:18px;background:#fff;"></div>
<div class="f" style="left:98px;top:479px;width:167px;height:18px;background:#fff;"></div>
<div class="f" style="left:266px;top:479px;width:27px;height:18px;background:#fff;"></div>
<div class="f" style="left:294px;top:479px;width:27px;height:18px;background:#fff;"></div>
<div class="f" style="left:322px;top:479px;width:47px;height:18px;background:#fff;"></div>
<div class="f" style="left:370px;top:479px;width:219px;height:18px;background:#fff;"></div>
<div class="f" style="left:590px;top:479px;width:68px;height:18px;background:#fff;"></div>
<div class="f" style="left:661px;top:479px;width:26px;height:18px;background:#fff;"></div>
<div class="f" style="left:690px;top:479px;width:12px;height:18px;background:#fff;"></div>
<div class="f" style="left:705px;top:479px;width:33px;height:18px;background:#fff;"></div>
<div class="f" style="left:741px;top:479px;width:33px;height:18px;background:#fff;"></div>
<div class="f" style="left:777px;top:479px;width:59px;height:18px;background:#fff;"></div>
<div class="f" style="left:839px;top:479px;width:68px;height:18px;background:#fff;"></div>
<div class="f" style="left:909px;top:479px;width:68px;height:18px;background:#fff;"></div>
<div class="f" style="left:42px;top:498px;width:26px;height:18px;background:#fff;"></div>
<div class="f" style="left:70px;top:498px;width:27px;height:18px;background:#fff;"></div>
<div class="f" style="left:98px;top:498px;width:167px;height:18px;background:#fff;"></div>
<div class="f" style="left:266px;top:498px;width:27px;height:18px;background:#fff;"></div>
<div class="f" style="left:294px;top:498px;width:27px;height:18px;background:#fff;"></div>
<div class="f" style="left:322px;top:498px;width:47px;height:18px;background:#fff;"></div>
<div class="f" style="left:370px;top:498px;width:219px;height:18px;background:#fff;"></div>
<div class="f" style="left:590px;top:498px;width:68px;height:18px;background:#fff;"></div>
<div class="f" style="left:661px;top:498px;width:26px;height:18px;background:#fff;"></div>
<div class="f" style="left:690px;top:498px;width:12px;height:18px;background:#fff;"></div>
<div class="f" style="left:705px;top:498px;width:33px;height:18px;background:#fff;"></div>
<div class="f" style="left:741px;top:498px;width:33px;height:18px;background:#fff;"></div>
<div class="f" style="left:777px;top:498px;width:59px;height:18px;background:#fff;"></div>
<div class="f" style="left:839px;top:498px;width:68px;height:18px;background:#fff;"></div>
<div class="f" style="left:909px;top:498px;width:68px;height:18px;background:#fff;"></div>
<div class="f" style="left:42px;top:517px;width:26px;height:17px;background:#fff;"></div>
<div class="f" style="left:70px;top:517px;width:27px;height:17px;background:#fff;"></div>
<div class="f" style="left:98px;top:517px;width:167px;height:17px;background:#fff;"></div>
<div class="f" style="left:266px;top:517px;width:27px;height:17px;background:#fff;"></div>
<div class="f" style="left:294px;top:517px;width:27px;height:17px;background:#fff;"></div>
<div class="f" style="left:322px;top:517px;width:47px;height:17px;background:#fff;"></div>
<div class="f" style="left:370px;top:517px;width:219px;height:17px;background:#fff;"></div>
<div class="f" style="left:590px;top:517px;width:68px;height:17px;background:#fff;"></div>
<div class="f" style="left:661px;top:517px;width:26px;height:17px;background:#fff;"></div>
<div class="f" style="left:690px;top:517px;width:12px;height:17px;background:#fff;"></div>
<div class="f" style="left:705px;top:517px;width:33px;height:17px;background:#fff;"></div>
<div class="f" style="left:741px;top:517px;width:33px;height:17px;background:#fff;"></div>
<div class="f" style="left:777px;top:517px;width:59px;height:17px;background:#fff;"></div>
<div class="f" style="left:839px;top:517px;width:68px;height:17px;background:#fff;"></div>
<div class="f" style="left:909px;top:517px;width:68px;height:17px;background:#fff;"></div>
<div class="f" style="left:42px;top:535px;width:26px;height:18px;background:#fff;"></div>
<div class="f" style="left:70px;top:535px;width:27px;height:18px;background:#fff;"></div>
<div class="f" style="left:98px;top:535px;width:167px;height:18px;background:#fff;"></div>
<div class="f" style="left:266px;top:535px;width:27px;height:18px;background:#fff;"></div>
<div class="f" style="left:294px;top:535px;width:27px;height:18px;background:#fff;"></div>
<div class="f" style="left:322px;top:535px;width:47px;height:18px;background:#fff;"></div>
<div class="f" style="left:370px;top:535px;width:219px;height:18px;background:#fff;"></div>
<div class="f" style="left:590px;top:535px;width:68px;height:18px;background:#fff;"></div>
<div class="f" style="left:661px;top:535px;width:26px;height:18px;background:#fff;"></div>
<div class="f" style="left:690px;top:535px;width:12px;height:18px;background:#fff;"></div>
<div class="f" style="left:705px;top:535px;width:33px;height:18px;background:#fff;"></div>
<div class="f" style="left:741px;top:535px;width:33px;height:18px;background:#fff;"></div>
<div class="f" style="left:777px;top:535px;width:59px;height:18px;background:#fff;"></div>
<div class="f" style="left:839px;top:535px;width:68px;height:18px;background:#fff;"></div>
<div class="f" style="left:909px;top:535px;width:68px;height:18px;background:#fff;"></div>
<div class="f" style="left:42px;top:554px;width:26px;height:18px;background:#fff;"></div>
<div class="f" style="left:70px;top:554px;width:27px;height:18px;background:#fff;"></div>
<div class="f" style="left:98px;top:554px;width:167px;height:18px;background:#fff;"></div>
<div class="f" style="left:266px;top:554px;width:27px;height:18px;background:#fff;"></div>
<div class="f" style="left:294px;top:554px;width:27px;height:18px;background:#fff;"></div>
<div class="f" style="left:322px;top:554px;width:47px;height:18px;background:#fff;"></div>
<div class="f" style="left:370px;top:554px;width:219px;height:18px;background:#fff;"></div>
<div class="f" style="left:590px;top:554px;width:68px;height:18px;background:#fff;"></div>
<div class="f" style="left:661px;top:554px;width:26px;height:18px;background:#fff;"></div>
<div class="f" style="left:690px;top:554px;width:12px;height:18px;background:#fff;"></div>
<div class="f" style="left:705px;top:554px;width:33px;height:18px;background:#fff;"></div>
<div class="f" style="left:741px;top:554px;width:33px;height:18px;background:#fff;"></div>
<div class="f" style="left:777px;top:554px;width:59px;height:18px;background:#fff;"></div>
<div class="f" style="left:839px;top:554px;width:68px;height:18px;background:#fff;"></div>
<div class="f" style="left:909px;top:554px;width:68px;height:18px;background:#fff;"></div>
<div class="f" style="left:42px;top:573px;width:26px;height:17px;background:#fff;"></div>
<div class="f" style="left:70px;top:573px;width:27px;height:17px;background:#fff;"></div>
<div class="f" style="left:98px;top:573px;width:167px;height:17px;background:#fff;"></div>
<div class="f" style="left:266px;top:573px;width:27px;height:17px;background:#fff;"></div>
<div class="f" style="left:294px;top:573px;width:27px;height:17px;background:#fff;"></div>
<div class="f" style="left:322px;top:573px;width:47px;height:17px;background:#fff;"></div>
<div class="f" style="left:370px;top:573px;width:219px;height:17px;background:#fff;"></div>
<div class="f" style="left:590px;top:573px;width:68px;height:17px;background:#fff;"></div>
<div class="f" style="left:661px;top:573px;width:26px;height:17px;background:#fff;"></div>
<div class="f" style="left:690px;top:573px;width:12px;height:17px;background:#fff;"></div>
<div class="f" style="left:705px;top:573px;width:33px;height:17px;background:#fff;"></div>
<div class="f" style="left:741px;top:573px;width:33px;height:17px;background:#fff;"></div>
<div class="f" style="left:777px;top:573px;width:59px;height:17px;background:#fff;"></div>
<div class="f" style="left:839px;top:573px;width:68px;height:17px;background:#fff;"></div>
<div class="f" style="left:909px;top:573px;width:68px;height:17px;background:#fff;"></div>
<div class="r" style="left:979px;top:236px;width:15px;height:37px;background:#ffffc6;"></div>
<div class="r" style="left:979px;top:273px;width:15px;height:318px;background:#fff;"></div>
<div class="r" style="left:979px;top:239px;width:11px;height:11px;box-sizing:border-box;border:1px solid #999;background:#fff;"></div>
<div class="r" style="left:979px;top:258px;width:11px;height:10px;box-sizing:border-box;border:1px solid #a2a2a2;background:#fff;box-shadow:1px 1px 0 #fff;"></div>
<div class="r" style="left:979px;top:277px;width:11px;height:10px;box-sizing:border-box;border:1px solid #a2a2a2;background:#e6eaf2;box-shadow:1px 1px 0 #fff;"></div>
<div class="r" style="left:979px;top:296px;width:11px;height:10px;box-sizing:border-box;border:1px solid #a2a2a2;background:#e6eaf2;box-shadow:1px 1px 0 #fff;"></div>
<div class="r" style="left:979px;top:314px;width:11px;height:10px;box-sizing:border-box;border:1px solid #a2a2a2;background:#e6eaf2;box-shadow:1px 1px 0 #fff;"></div>
<div class="r" style="left:979px;top:333px;width:11px;height:10px;box-sizing:border-box;border:1px solid #a2a2a2;background:#e6eaf2;box-shadow:1px 1px 0 #fff;"></div>
<div class="r" style="left:979px;top:352px;width:11px;height:10px;box-sizing:border-box;border:1px solid #a2a2a2;background:#e6eaf2;box-shadow:1px 1px 0 #fff;"></div>
<div class="r" style="left:979px;top:370px;width:11px;height:10px;box-sizing:border-box;border:1px solid #a2a2a2;background:#e6eaf2;box-shadow:1px 1px 0 #fff;"></div>
<div class="r" style="left:979px;top:389px;width:11px;height:10px;box-sizing:border-box;border:1px solid #a2a2a2;background:#e6eaf2;box-shadow:1px 1px 0 #fff;"></div>
<div class="r" style="left:979px;top:408px;width:11px;height:10px;box-sizing:border-box;border:1px solid #a2a2a2;background:#e6eaf2;box-shadow:1px 1px 0 #fff;"></div>
<div class="r" style="left:979px;top:426px;width:11px;height:10px;box-sizing:border-box;border:1px solid #a2a2a2;background:#e6eaf2;box-shadow:1px 1px 0 #fff;"></div>
<div class="r" style="left:979px;top:445px;width:11px;height:10px;box-sizing:border-box;border:1px solid #a2a2a2;background:#e6eaf2;box-shadow:1px 1px 0 #fff;"></div>
<div class="r" style="left:979px;top:464px;width:11px;height:10px;box-sizing:border-box;border:1px solid #a2a2a2;background:#e6eaf2;box-shadow:1px 1px 0 #fff;"></div>
<div class="r" style="left:979px;top:482px;width:11px;height:10px;box-sizing:border-box;border:1px solid #a2a2a2;background:#e6eaf2;box-shadow:1px 1px 0 #fff;"></div>
<div class="r" style="left:979px;top:501px;width:11px;height:10px;box-sizing:border-box;border:1px solid #a2a2a2;background:#e6eaf2;box-shadow:1px 1px 0 #fff;"></div>
<div class="r" style="left:979px;top:520px;width:11px;height:10px;box-sizing:border-box;border:1px solid #a2a2a2;background:#e6eaf2;box-shadow:1px 1px 0 #fff;"></div>
<div class="r" style="left:979px;top:538px;width:11px;height:10px;box-sizing:border-box;border:1px solid #a2a2a2;background:#e6eaf2;box-shadow:1px 1px 0 #fff;"></div>
<div class="r" style="left:979px;top:557px;width:11px;height:10px;box-sizing:border-box;border:1px solid #a2a2a2;background:#e6eaf2;box-shadow:1px 1px 0 #fff;"></div>
<div class="r" style="left:979px;top:576px;width:11px;height:10px;box-sizing:border-box;border:1px solid #a2a2a2;background:#e6eaf2;box-shadow:1px 1px 0 #fff;"></div>
<div class="r" style="left:24px;top:255px;width:14px;height:336px;box-sizing:border-box;background:#e8ecf4;border:1px solid #c8d6ea;border-radius:7px 7px 7px 7px;"></div>
<div class="r" style="left:25px;top:269px;width:12px;height:1px;background:#5c5c78;"></div>
<div class="r" style="left:25px;top:270px;width:1px;height:305px;background:#fafcff;"></div>
<svg class="sv" style="left:27px;top:260px" width="8" height="5" viewBox="0 0 8 5"><path d="M0 5 H8 L4 0.5Z" fill="#5c5c78"/></svg>
<div class="r" style="left:25px;top:575px;width:12px;height:1px;background:#7088aa;"></div>
<svg class="sv" style="left:27px;top:581px" width="8" height="5" viewBox="0 0 8 5"><path d="M0 0 H8 L4 4.5Z" fill="#5c5c78"/></svg>
<svg class="sv" style="left:24px;top:370px" width="14" height="92" viewBox="0 0 14 92"><path d="M4.0 9 l1.5 -1.5" stroke="#5577aa" stroke-width="1"/><path d="M9 5 l1.5 -1.5" stroke="#5577aa" stroke-width="1"/><path d="M4.0 17 l1.5 -1.5" stroke="#5577aa" stroke-width="1"/><path d="M9 13 l1.5 -1.5" stroke="#5577aa" stroke-width="1"/><path d="M4.0 25 l1.5 -1.5" stroke="#5577aa" stroke-width="1"/><path d="M9 21 l1.5 -1.5" stroke="#5577aa" stroke-width="1"/><path d="M4.0 33 l1.5 -1.5" stroke="#5577aa" stroke-width="1"/><path d="M9 29 l1.5 -1.5" stroke="#5577aa" stroke-width="1"/><path d="M4.0 41 l1.5 -1.5" stroke="#5577aa" stroke-width="1"/><path d="M9 37 l1.5 -1.5" stroke="#5577aa" stroke-width="1"/><path d="M4.0 49 l1.5 -1.5" stroke="#5577aa" stroke-width="1"/><path d="M9 45 l1.5 -1.5" stroke="#5577aa" stroke-width="1"/><path d="M4.0 57 l1.5 -1.5" stroke="#5577aa" stroke-width="1"/><path d="M9 53 l1.5 -1.5" stroke="#5577aa" stroke-width="1"/><path d="M4.0 65 l1.5 -1.5" stroke="#5577aa" stroke-width="1"/><path d="M9 61 l1.5 -1.5" stroke="#5577aa" stroke-width="1"/><path d="M4.0 73 l1.5 -1.5" stroke="#5577aa" stroke-width="1"/><path d="M9 69 l1.5 -1.5" stroke="#5577aa" stroke-width="1"/><path d="M4.0 81 l1.5 -1.5" stroke="#5577aa" stroke-width="1"/><path d="M9 77 l1.5 -1.5" stroke="#5577aa" stroke-width="1"/><path d="M4.0 89 l1.5 -1.5" stroke="#5577aa" stroke-width="1"/><path d="M9 85 l1.5 -1.5" stroke="#5577aa" stroke-width="1"/></svg>
<div class="r" style="left:10px;top:590px;width:104px;height:20px;overflow:hidden"><div class="t" style="right:1px;top:7px;font-size:10.8px">Nome Do Responsavel</div></div>
<div class="f" style="left:115px;top:593px;width:47px;height:19px;background:#ffffc6;"></div>
<div class="f" style="left:165px;top:593px;width:188px;height:19px;background:#ffffc6;"></div>
<div class="t" style="right:611px;top:597px;font-size:11px;color:#000;font-weight:normal;">Previsao</div>
<div class="f" style="left:421px;top:593px;width:60px;height:19px;background:#ffffc6;"></div>
<div class="f" style="left:839px;top:593px;width:68px;height:19px;background:#ffffc6;"></div>
<div class="f" style="left:909px;top:593px;width:68px;height:19px;background:#ffffc6;"></div>
<div class="r" style="left:931px;top:616px;width:62px;height:16px;box-sizing:border-box;border:1px solid;border-color:#a8a8a8 #6f8fbb #6f8fbb #a8a8a8;border-radius:2px;"></div>
<div class="t" style="left:761px;width:400px;text-align:center;top:620px;font-size:11px;color:#000;font-weight:normal;">Alterar</div>
<div class="r" style="left:7px;top:659px;width:1013px;height:1px;background:#4a6a9a;"></div>
<div class="r" style="left:5px;top:681px;width:1016px;height:2px;background:#cac6c2;"></div>
<div class="r" style="left:7px;top:660px;width:125px;height:21px;background:#ccd9ea;border-radius:0 0 4px 4px;"></div>
<div class="r" style="left:7px;top:660px;width:1px;height:19px;background:#dde7f4;"></div>
<div class="t" style="left:-130.5px;width:400px;text-align:center;top:665px;font-size:11px;color:#333;font-weight:normal;">Titulos Fornecedores</div>
<div class="r" style="left:135px;top:660px;width:122px;height:21px;background:#ccd9ea;border-radius:0 0 4px 4px;"></div>
<div class="r" style="left:135px;top:660px;width:1px;height:19px;background:#dde7f4;"></div>
<div class="t" style="left:-3.0px;width:400px;text-align:center;top:665px;font-size:11px;color:#333;font-weight:normal;">Consulta Titulos</div>
<div class="r" style="left:260px;top:660px;width:126px;height:21px;background:#ccd9ea;border-radius:0 0 4px 4px;"></div>
<div class="r" style="left:260px;top:660px;width:1px;height:19px;background:#dde7f4;"></div>
<div class="t" style="left:267.5px;top:665px;font-size:11px;color:#333;font-weight:normal;">Inclusao De Instrucoes</div>
<div class="r" style="left:384px;top:659px;width:123px;height:22px;box-sizing:border-box;background:#94b5d9;border-left:1px solid #6a88b4;border-bottom:1px solid #6a88b4;border-radius:0 0 3px 4px;"></div>
<div class="t" style="left:246px;width:400px;text-align:center;top:665px;font-size:11.2px;color:#111;font-weight:normal;">Alterar Titulos</div>
<div class="r" style="left:4px;top:114px;width:1019px;height:570px;box-sizing:border-box;border-left:1px solid #3d5f93;border-right:1px solid #3f5f8f;border-bottom:1px solid #3d5f93;border-radius:0 0 4px 3px;"></div>
<div class="r" style="left:1023px;top:114px;width:6px;height:570px;background:#fff;"></div>
<div class="r" style="left:4px;top:684px;width:1025px;height:8px;background:#e8ecf4;"></div>
<div class="r" style="left:4px;top:684px;width:5px;height:8px;background:#fff;"></div>
<div class="r" style="left:4px;top:684px;width:1025px;height:1px;background:#d6e0ee;"></div>
<div class="r" style="left:8px;top:685px;width:1021px;height:8px;box-sizing:border-box;background:#e9edf5;border-top-left-radius:8px;border-top:1px solid #d0dcee;border-left:1px solid #c8d8ee;"></div>
<div class="r" style="left:377px;top:653px;width:134px;height:36px;box-sizing:border-box;border:5px solid #ff0000;border-radius:3px;"></div>
</body></html>
